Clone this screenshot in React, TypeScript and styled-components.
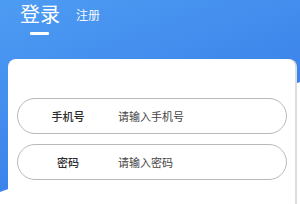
import React from 'react'
import styled, { createGlobalStyle } from 'styled-components'

const GlobalStyle = createGlobalStyle`
  html, body {
    margin: 0;
    padding: 0;
    background: #ffffff;
  }
  body {
    font-family: "Noto Sans CJK SC", "Noto Sans", sans-serif;
  }
`

const Page = styled.div`
  position: relative;
  width: 300px;
  height: 204px;
  overflow: hidden;
  // 蓝色背景，底边是斜的
  &::before {
    content: '';
    position: absolute;
    left: 0;
    top: 0;
    width: 100%;
    height: 194px;
    background: linear-gradient(160deg, #4d9cf3 0%, #3e86eb 55%, #3178e8 100%);
    clip-path: polygon(0 0, 100% 0, 100% 82px, 0 192px);
  }
`

const Header = styled.header`
  position: relative;
  height: 59px;
  padding: 2px 0 0 20px;
  box-sizing: border-box;
`

const Tabs = styled.div`
  display: flex;
  align-items: center;
  gap: 16px;
  height: 24px;
`

const Tab = styled.span<{ $active?: boolean }>`
  color: #ffffff;
  font-size: ${props => (props.$active ? '20px' : '12px')};
  line-height: 24px;
  opacity: ${props => (props.$active ? 1 : 0.95)};
  padding-top: ${props => (props.$active ? '0' : '2px')};
`

const Underline = styled.div`
  width: 19px;
  height: 3px;
  margin: 6px 0 0 10px;
  background: #ffffff;
  border-radius: 1px;
`

const Card = styled.div`
  position: relative;
  width: 287px;
  height: 145px;
  margin-left: 8px;
  padding: 39px 8px 0 9px;
  box-sizing: border-box;
  background: #ffffff;
  border-radius: 8px 8px 0 0;
  box-shadow: 2px 0 0 #dddddd;
  display: flex;
  flex-direction: column;
  gap: 10px;
`

const Field = styled.label`
  display: flex;
  align-items: center;
  height: 36px;
  border: 1px solid #b9b9b9;
  border-radius: 18px;
  box-sizing: border-box;
  font-size: 11px;
`

const FieldName = styled.span`
  width: 100px;
  text-align: center;
  color: #2a2a2a;
  font-weight: 500;
`

const Placeholder = styled.span`
  color: #444444;
`

const fields = [
  { name: '手机号', hint: '请输入手机号' },
  { name: '密码', hint: '请输入密码' },
]

const App = () => {
  return (
    <Page>
      <GlobalStyle />
      <Header>
        <Tabs>
          <Tab $active>登录</Tab>
          <Tab>注册</Tab>
        </Tabs>
        <Underline />
      </Header>
      <Card>
        {fields.map(f => (
          <Field key={f.name}>
            <FieldName>{f.name}</FieldName>
            <Placeholder>{f.hint}</Placeholder>
          </Field>
        ))}
      </Card>
    </Page>
  )
}

export default App
